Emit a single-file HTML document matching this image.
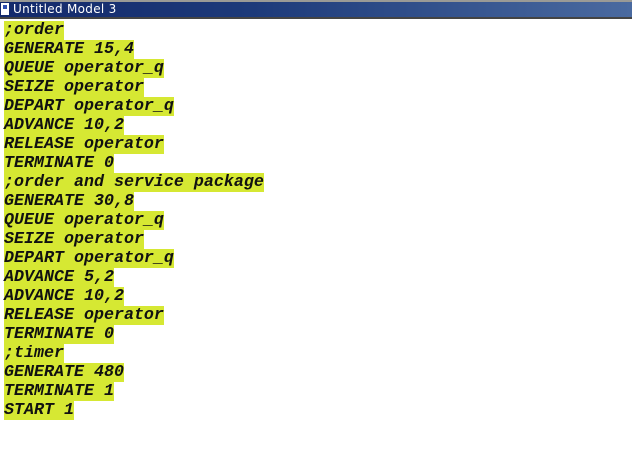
<!DOCTYPE html>
<html><head><meta charset="utf-8"><style>
html,body{margin:0;padding:0;width:632px;height:451px;background:#fff;overflow:hidden}
.tb{position:absolute;left:0;top:0;width:632px;height:19px;background:#9a9a96}
.tbi{position:absolute;left:0;top:2px;width:632px;height:15px;background:linear-gradient(to right,#13296b,#1d3a7a 40%,#4a6aa0)}
.tbl{position:absolute;left:0;top:17px;width:632px;height:2px;background:#444}
.t{position:absolute;left:13px;top:2px;color:#fff;font:12px "DejaVu Sans",sans-serif;line-height:15px;letter-spacing:0.3px}
.ic{position:absolute;left:1px;top:3px;width:8px;height:12px;background:#fff}
.ic:after{content:"";position:absolute;left:2px;top:2px;width:4px;height:4px;background:#3050b0}
.code{position:absolute;left:4px;top:21px;font:bold italic 16.67px "Liberation Mono",monospace;color:#111}
.code div{height:19px;line-height:19px}
.code span{background:#d6e833;display:inline-block;height:19px;white-space:pre}
</style></head><body>
<div class="tb"></div><div class="tbi"></div><div class="tbl"></div>
<div class="ic"></div><div class="t">Untitled Model 3</div>
<div class="code">
<div><span>;order</span></div>
<div><span>GENERATE 15,4</span></div>
<div><span>QUEUE operator_q</span></div>
<div><span>SEIZE operator</span></div>
<div><span>DEPART operator_q</span></div>
<div><span>ADVANCE 10,2</span></div>
<div><span>RELEASE operator</span></div>
<div><span>TERMINATE 0</span></div>
<div><span>;order and service package</span></div>
<div><span>GENERATE 30,8</span></div>
<div><span>QUEUE operator_q</span></div>
<div><span>SEIZE operator</span></div>
<div><span>DEPART operator_q</span></div>
<div><span>ADVANCE 5,2</span></div>
<div><span>ADVANCE 10,2</span></div>
<div><span>RELEASE operator</span></div>
<div><span>TERMINATE 0</span></div>
<div><span>;timer</span></div>
<div><span>GENERATE 480</span></div>
<div><span>TERMINATE 1</span></div>
<div><span>START 1</span></div>
</div>
</body></html>
